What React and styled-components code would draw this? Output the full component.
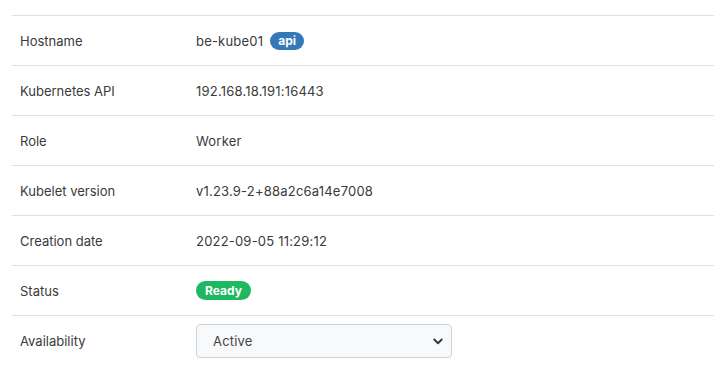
import React, { useState } from 'react';
import styled, { createGlobalStyle } from 'styled-components';

const Global = createGlobalStyle`
  body {
    margin: 0;
    background: #fff;
    font-family: Inter, "Noto Sans", "Liberation Sans", sans-serif;
    color: #333;
  }
`;

const Page = styled.div`
  padding: 15px 12px 0;
`;

const Table = styled.div`
  display: grid;
  grid-template-columns: 184px 1fr;
`;

const Row = styled.div`
  display: contents;
  & > div { border-top: 1px solid #dee2e6; }
`;

const Label = styled.div`
  height: 49px;
  display: flex;
  align-items: center;
  padding: 0 8px;
  font-size: 13px;
  color: #3a3a3a;
`;

const Value = styled.div`
  height: 49px;
  display: flex;
  align-items: center;
  gap: 7px;
  font-size: 13px;
  letter-spacing: 0.2px;
  color: #3a3a3a;
`;

const Badge = styled.span`
  display: inline-flex;
  align-items: center;
  height: ${p => p.$h || 18}px;
  padding: 0 ${p => p.$px || 7}px;
  border-radius: 10px;
  background: ${p => p.$bg};
  color: #fff;
  font-weight: 700;
  font-size: 12px;
  letter-spacing: 0;
  line-height: 1;
`;

const SelectWrap = styled.div`
  position: relative;
  width: 256px;
`;

const Select = styled.select`
  appearance: none;
  width: 100%;
  height: 34px;
  box-sizing: border-box;
  padding: 0 30px 0 16px;
  border: 1px solid #ced4da;
  border-radius: 4px;
  background: #f8f9fa;
  color: #444;
  font-family: Inter, "Noto Sans", "Liberation Sans", sans-serif;
  font-size: 13px;
  letter-spacing: 0.2px;
  outline: none;
`;

const Chevron = styled.svg`
  position: absolute;
  right: 8px;
  top: 50%;
  transform: translateY(-50%);
  pointer-events: none;
`;

const rows = [
  ['Hostname', <>be-kube01 <Badge $bg="#3478b8" $px={8}>api</Badge></>],
  ['Kubernetes API', '192.168.18.191:16443'],
  ['Role', 'Worker'],
  ['Kubelet version', 'v1.23.9-2+88a2c6a14e7008'],
  ['Creation date', '2022-09-05 11:29:12'],
  ['Status', <Badge $bg="#1db85f" $h={19} $px={9}>Ready</Badge>],
];

export default function App() {
  const [availability, setAvailability] = useState('active');
  return (
    <Page>
      <Global />
      <Table>
        {rows.map(([k, v]) => (
          <Row key={k}>
            <Label>{k}</Label>
            <Value>{v}</Value>
          </Row>
        ))}
        <Row>
          <Label>Availability</Label>
          <Value>
            <SelectWrap>
              <Select value={availability} onChange={e => setAvailability(e.target.value)}>
                <option value="active">Active</option>
                <option value="pause">Pause</option>
                <option value="drain">Drain</option>
              </Select>
              <Chevron width="12" height="12" viewBox="0 0 16 16">
                <path d="M3 6l5 5 5-5" fill="none" stroke="#333" strokeWidth="2.4" strokeLinecap="round" strokeLinejoin="round" />
              </Chevron>
            </SelectWrap>
          </Value>
        </Row>
      </Table>
    </Page>
  );
}
